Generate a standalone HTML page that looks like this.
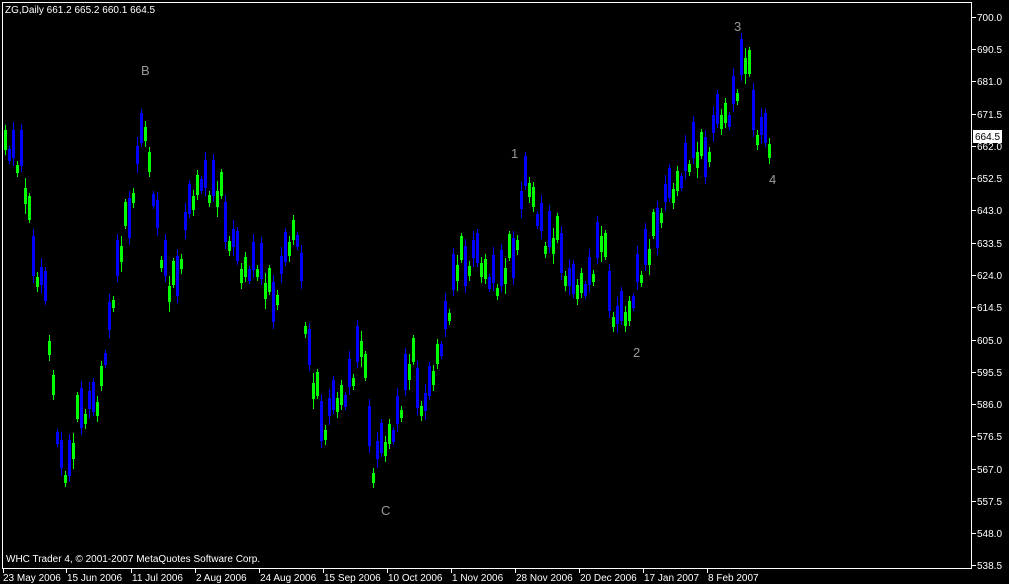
<!DOCTYPE html>
<html><head><meta charset="utf-8"><style>
html,body{margin:0;padding:0;background:#000;width:1009px;height:584px;overflow:hidden}
svg{display:block}
</style></head><body>
<svg width="1009" height="584" xmlns="http://www.w3.org/2000/svg" font-family="Liberation Sans, sans-serif" font-size="10">
<rect x="0" y="0" width="1009" height="584" fill="#000"/>
<path fill="#00ff00" d="M4 130h3v20h-3zM5 125h1v30h-1zM16 165h3v8h-3zM17 161h1v16h-1zM24 188h3v16h-3zM25 178h1v36h-1zM28 196h3v24h-3zM29 193h1v30h-1zM36 277h3v10h-3zM37 272h1v20h-1zM48 341h3v14h-3zM49 335h1v26h-1zM52 375h3v20h-3zM53 370h1v30h-1zM64 475h3v8h-3zM65 471h1v16h-1zM72 443h3v16h-3zM73 433h1v36h-1zM76 395h3v24h-3zM77 392h1v30h-1zM84 414h3v10h-3zM85 409h1v20h-1zM96 402h3v14h-3zM97 396h1v26h-1zM100 366h3v20h-3zM101 361h1v30h-1zM112 300h3v8h-3zM113 296h1v16h-1zM120 246h3v16h-3zM121 236h1v36h-1zM124 202h3v24h-3zM125 199h1v30h-1zM132 193h3v10h-3zM133 188h1v20h-1zM144 127h3v14h-3zM145 121h1v26h-1zM148 152h3v20h-3zM149 147h1v30h-1zM160 260h3v8h-3zM161 256h1v16h-1zM168 286h3v16h-3zM169 276h1v36h-1zM172 261h3v24h-3zM173 258h1v30h-1zM180 259h3v10h-3zM181 254h1v20h-1zM192 196h3v14h-3zM193 190h1v26h-1zM196 175h3v20h-3zM197 170h1v30h-1zM208 195h3v8h-3zM209 191h1v16h-1zM216 191h3v16h-3zM217 181h1v36h-1zM220 172h3v24h-3zM221 169h1v30h-1zM228 241h3v10h-3zM229 236h1v20h-1zM240 269h3v14h-3zM241 263h1v26h-1zM244 257h3v20h-3zM245 252h1v30h-1zM256 269h3v8h-3zM257 265h1v16h-1zM264 283h3v16h-3zM265 273h1v36h-1zM268 268h3v24h-3zM269 265h1v30h-1zM276 295h3v10h-3zM277 290h1v20h-1zM288 242h3v14h-3zM289 236h1v26h-1zM292 220h3v20h-3zM293 215h1v30h-1zM304 326h3v8h-3zM305 322h1v16h-1zM312 383h3v16h-3zM313 373h1v36h-1zM316 372h3v24h-3zM317 369h1v30h-1zM324 430h3v10h-3zM325 425h1v20h-1zM336 398h3v14h-3zM337 392h1v26h-1zM340 385h3v20h-3zM341 380h1v30h-1zM352 378h3v8h-3zM353 374h1v16h-1zM360 341h3v16h-3zM361 331h1v36h-1zM364 354h3v24h-3zM365 351h1v30h-1zM372 473h3v10h-3zM373 468h1v20h-1zM384 442h3v14h-3zM385 436h1v26h-1zM388 424h3v20h-3zM389 419h1v30h-1zM400 410h3v8h-3zM401 406h1v16h-1zM408 364h3v16h-3zM409 354h1v36h-1zM412 338h3v24h-3zM413 335h1v30h-1zM420 406h3v10h-3zM421 401h1v20h-1zM432 371h3v14h-3zM433 365h1v26h-1zM436 344h3v20h-3zM437 339h1v30h-1zM448 313h3v8h-3zM449 309h1v16h-1zM456 265h3v16h-3zM457 255h1v36h-1zM460 236h3v24h-3zM461 233h1v30h-1zM468 266h3v10h-3zM469 261h1v20h-1zM480 263h3v14h-3zM481 257h1v26h-1zM484 259h3v20h-3zM485 254h1v30h-1zM496 288h3v8h-3zM497 284h1v16h-1zM504 268h3v16h-3zM505 258h1v36h-1zM508 234h3v24h-3zM509 231h1v30h-1zM516 240h3v10h-3zM517 235h1v20h-1zM528 183h3v14h-3zM529 177h1v26h-1zM532 187h3v20h-3zM533 182h1v30h-1zM544 246h3v8h-3zM545 242h1v16h-1zM552 238h3v16h-3zM553 228h1v36h-1zM556 216h3v24h-3zM557 213h1v30h-1zM564 276h3v10h-3zM565 271h1v20h-1zM576 285h3v14h-3zM577 279h1v26h-1zM580 273h3v20h-3zM581 268h1v30h-1zM592 274h3v8h-3zM593 270h1v16h-1zM600 236h3v16h-3zM601 226h1v36h-1zM604 233h3v24h-3zM605 230h1v30h-1zM612 317h3v10h-3zM613 312h1v20h-1zM624 312h3v14h-3zM625 306h1v26h-1zM628 301h3v20h-3zM629 296h1v30h-1zM640 275h3v8h-3zM641 271h1v16h-1zM648 249h3v16h-3zM649 239h1v36h-1zM652 212h3v24h-3zM653 209h1v30h-1zM660 213h3v10h-3zM661 208h1v20h-1zM672 189h3v14h-3zM673 183h1v26h-1zM676 171h3v20h-3zM677 166h1v30h-1zM688 164h3v8h-3zM689 160h1v16h-1zM696 152h3v16h-3zM697 142h1v36h-1zM700 132h3v24h-3zM701 129h1v30h-1zM708 152h3v10h-3zM709 147h1v20h-1zM720 115h3v14h-3zM721 109h1v26h-1zM724 103h3v20h-3zM725 98h1v30h-1zM736 93h3v8h-3zM737 89h1v16h-1zM744 58h3v16h-3zM745 48h1v36h-1zM748 50h3v24h-3zM749 47h1v30h-1zM756 135h3v10h-3zM757 130h1v20h-1zM768 144h3v14h-3zM769 138h1v26h-1z"/>
<path fill="#0000ff" d="M8 149h3v12h-3zM9 146h1v18h-1zM12 130h3v28h-3zM13 122h1v44h-1zM20 130h3v36h-3zM21 124h1v48h-1zM32 236h3v40h-3zM33 229h1v54h-1zM40 267h3v18h-3zM41 258h1v36h-1zM44 271h3v30h-3zM45 267h1v38h-1zM56 432h3v12h-3zM57 429h1v18h-1zM60 440h3v28h-3zM61 432h1v44h-1zM68 440h3v36h-3zM69 434h1v48h-1zM80 388h3v40h-3zM81 381h1v54h-1zM88 391h3v18h-3zM89 382h1v36h-1zM92 382h3v30h-3zM93 378h1v38h-1zM104 353h3v12h-3zM105 350h1v18h-1zM108 302h3v28h-3zM109 294h1v44h-1zM116 240h3v36h-3zM117 234h1v48h-1zM128 198h3v40h-3zM129 191h1v54h-1zM136 146h3v18h-3zM137 137h1v36h-1zM140 113h3v30h-3zM141 109h1v38h-1zM152 194h3v12h-3zM153 191h1v18h-1zM156 200h3v28h-3zM157 192h1v44h-1zM164 240h3v36h-3zM165 234h1v48h-1zM176 256h3v40h-3zM177 249h1v54h-1zM184 212h3v18h-3zM185 203h1v36h-1zM188 184h3v30h-3zM189 180h1v38h-1zM200 179h3v12h-3zM201 176h1v18h-1zM204 160h3v28h-3zM205 152h1v44h-1zM212 160h3v36h-3zM213 154h1v48h-1zM224 202h3v40h-3zM225 195h1v54h-1zM232 229h3v18h-3zM233 220h1v36h-1zM236 231h3v30h-3zM237 227h1v38h-1zM248 269h3v12h-3zM249 266h1v18h-1zM252 242h3v28h-3zM253 234h1v44h-1zM260 243h3v36h-3zM261 237h1v48h-1zM272 282h3v40h-3zM273 275h1v54h-1zM280 256h3v18h-3zM281 247h1v36h-1zM284 232h3v30h-3zM285 228h1v38h-1zM296 235h3v12h-3zM297 232h1v18h-1zM300 253h3v28h-3zM301 245h1v44h-1zM308 329h3v36h-3zM309 323h1v48h-1zM320 401h3v40h-3zM321 394h1v54h-1zM328 398h3v18h-3zM329 389h1v36h-1zM332 380h3v30h-3zM333 376h1v38h-1zM344 395h3v12h-3zM345 392h1v18h-1zM348 359h3v28h-3zM349 351h1v44h-1zM356 326h3v36h-3zM357 320h1v48h-1zM368 406h3v40h-3zM369 399h1v54h-1zM376 441h3v18h-3zM377 432h1v36h-1zM380 423h3v30h-3zM381 419h1v38h-1zM392 430h3v12h-3zM393 427h1v18h-1zM396 396h3v28h-3zM397 388h1v44h-1zM404 354h3v36h-3zM405 348h1v48h-1zM416 368h3v40h-3zM417 361h1v54h-1zM424 393h3v18h-3zM425 384h1v36h-1zM428 366h3v30h-3zM429 362h1v38h-1zM440 344h3v12h-3zM441 341h1v18h-1zM444 301h3v28h-3zM445 293h1v44h-1zM452 254h3v36h-3zM453 248h1v48h-1zM464 246h3v40h-3zM465 239h1v54h-1zM472 240h3v18h-3zM473 231h1v36h-1zM476 233h3v30h-3zM477 229h1v38h-1zM488 277h3v12h-3zM489 274h1v18h-1zM492 255h3v28h-3zM493 247h1v44h-1zM500 250h3v36h-3zM501 244h1v48h-1zM512 238h3v40h-3zM513 231h1v54h-1zM520 191h3v18h-3zM521 182h1v36h-1zM524 156h3v30h-3zM525 152h1v38h-1zM536 214h3v12h-3zM537 211h1v18h-1zM540 203h3v28h-3zM541 195h1v44h-1zM548 211h3v36h-3zM549 205h1v48h-1zM560 233h3v40h-3zM561 226h1v54h-1zM568 268h3v18h-3zM569 259h1v36h-1zM572 264h3v30h-3zM573 260h1v38h-1zM584 284h3v12h-3zM585 281h1v18h-1zM588 257h3v28h-3zM589 249h1v44h-1zM596 222h3v36h-3zM597 216h1v48h-1zM608 271h3v40h-3zM609 264h1v54h-1zM616 306h3v18h-3zM617 297h1v36h-1zM620 291h3v30h-3zM621 287h1v38h-1zM632 296h3v12h-3zM633 293h1v18h-1zM636 254h3v28h-3zM637 246h1v44h-1zM644 229h3v36h-3zM645 223h1v48h-1zM656 208h3v40h-3zM657 201h1v54h-1zM664 184h3v18h-3zM665 175h1v36h-1zM668 168h3v30h-3zM669 164h1v38h-1zM680 176h3v12h-3zM681 173h1v18h-1zM684 143h3v28h-3zM685 135h1v44h-1zM692 122h3v36h-3zM693 116h1v48h-1zM704 137h3v40h-3zM705 130h1v54h-1zM712 115h3v18h-3zM713 106h1v36h-1zM716 94h3v30h-3zM717 90h1v38h-1zM728 115h3v12h-3zM729 112h1v18h-1zM732 76h3v28h-3zM733 68h1v44h-1zM740 39h3v36h-3zM741 33h1v48h-1zM752 90h3v40h-3zM753 83h1v54h-1zM760 117h3v18h-3zM761 108h1v36h-1zM764 113h3v30h-3zM765 109h1v38h-1z"/>
<rect x="2.5" y="2.5" width="969" height="566" fill="none" stroke="#fff" stroke-width="1"/>
<text x="5" y="13" fill="#fff">ZG,Daily  661.2 665.2 660.1 664.5</text>
<text x="6" y="562" fill="#fff">WHC Trader 4, © 2001-2007 MetaQuotes Software Corp.</text>
<g fill="#999" font-size="13">
<text x="141" y="75">B</text>
<text x="511" y="158">1</text>
<text x="734" y="31">3</text>
<text x="633" y="357">2</text>
<text x="769" y="184">4</text>
<text x="381" y="515">C</text>
</g>
<g fill="#fff">
<rect x="972" y="17" width="4" height="1"/><text x="977" y="21">700.0</text>
<rect x="972" y="49" width="4" height="1"/><text x="977" y="53">690.5</text>
<rect x="972" y="81" width="4" height="1"/><text x="977" y="85">681.0</text>
<rect x="972" y="114" width="4" height="1"/><text x="977" y="118">671.5</text>
<rect x="972" y="146" width="4" height="1"/><text x="977" y="150">662.0</text>
<rect x="972" y="178" width="4" height="1"/><text x="977" y="182">652.5</text>
<rect x="972" y="210" width="4" height="1"/><text x="977" y="214">643.0</text>
<rect x="972" y="243" width="4" height="1"/><text x="977" y="247">633.5</text>
<rect x="972" y="275" width="4" height="1"/><text x="977" y="279">624.0</text>
<rect x="972" y="307" width="4" height="1"/><text x="977" y="311">614.5</text>
<rect x="972" y="340" width="4" height="1"/><text x="977" y="344">605.0</text>
<rect x="972" y="372" width="4" height="1"/><text x="977" y="376">595.5</text>
<rect x="972" y="404" width="4" height="1"/><text x="977" y="408">586.0</text>
<rect x="972" y="436" width="4" height="1"/><text x="977" y="440">576.5</text>
<rect x="972" y="469" width="4" height="1"/><text x="977" y="473">567.0</text>
<rect x="972" y="501" width="4" height="1"/><text x="977" y="505">557.5</text>
<rect x="972" y="533" width="4" height="1"/><text x="977" y="537">548.0</text>
<rect x="972" y="565" width="4" height="1"/><text x="977" y="569">538.5</text>
<rect x="3" y="569" width="1" height="4"/><text x="3" y="581">23 May 2006</text>
<rect x="66" y="569" width="1" height="4"/><text x="67" y="581">15 Jun 2006</text>
<rect x="131" y="569" width="1" height="4"/><text x="132" y="581">11 Jul 2006</text>
<rect x="195" y="569" width="1" height="4"/><text x="196" y="581">2 Aug 2006</text>
<rect x="259" y="569" width="1" height="4"/><text x="260" y="581">24 Aug 2006</text>
<rect x="323" y="569" width="1" height="4"/><text x="324" y="581">15 Sep 2006</text>
<rect x="387" y="569" width="1" height="4"/><text x="388" y="581">10 Oct 2006</text>
<rect x="451" y="569" width="1" height="4"/><text x="452" y="581">1 Nov 2006</text>
<rect x="515" y="569" width="1" height="4"/><text x="516" y="581">28 Nov 2006</text>
<rect x="579" y="569" width="1" height="4"/><text x="580" y="581">20 Dec 2006</text>
<rect x="643" y="569" width="1" height="4"/><text x="644" y="581">17 Jan 2007</text>
<rect x="707" y="569" width="1" height="4"/><text x="708" y="581">8 Feb 2007</text>
</g>
<rect x="973" y="130" width="29" height="13" fill="#fff"/>
<text x="975" y="140" fill="#000">664.5</text>
</svg>
</body></html>
